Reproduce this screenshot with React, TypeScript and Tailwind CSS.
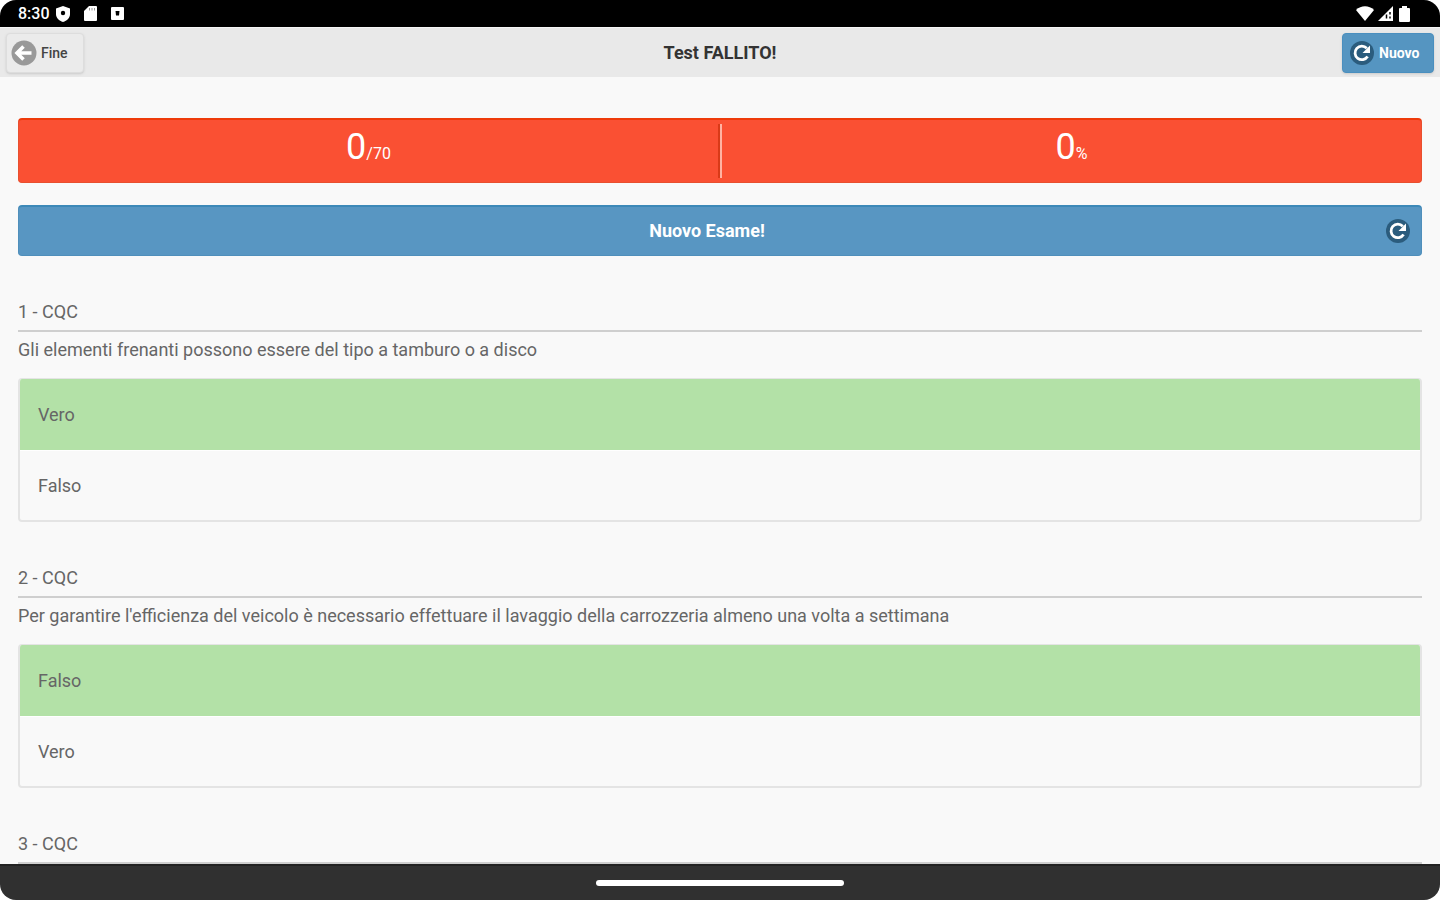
import React from "react";

type IconProps = { className?: string };

type Question = {
  id: number;
  category: string;
  text: string;
  answers: { label: string; correct: boolean }[];
};

const questions: Question[] = [
  {
    id: 1,
    category: "CQC",
    text: "Gli elementi frenanti possono essere del tipo a tamburo o a disco",
    answers: [
      { label: "Vero", correct: true },
      { label: "Falso", correct: false },
    ],
  },
  {
    id: 2,
    category: "CQC",
    text: "Per garantire l'efficienza del veicolo è necessario effettuare il lavaggio della carrozzeria almeno una volta a settimana",
    answers: [
      { label: "Falso", correct: true },
      { label: "Vero", correct: false },
    ],
  },
  {
    id: 3,
    category: "CQC",
    text: "",
    answers: [],
  },
];

const BackIcon = ({ className }: IconProps) => (
  <svg viewBox="0 0 26 26" className={className} aria-hidden="true">
    <circle cx="13" cy="13" r="12.5" fill="#999999" />
    <path
      d="M12.5 6.5 6 13l6.5 6.5M7 13h13.5"
      fill="none"
      stroke="#fff"
      strokeWidth="3.6"
    />
  </svg>
);

const RefreshIcon = ({ className }: IconProps) => (
  <svg viewBox="0 0 26 26" className={className} aria-hidden="true">
    <circle cx="13" cy="13" r="12" fill="#2b5c7d" />
    <path
      d="M18.6 16.5A6.8 6.8 0 1 1 17.8 8.200"
      fill="none"
      stroke="#fff"
      strokeWidth="2.8"
    />
    <path d="M21 5.500v7.500h-7.500z" fill="#fff" />
  </svg>
);

const StatusBar = () => (
  <div className="flex h-[27px] shrink-0 items-center justify-between bg-black pr-[30px] pl-[18px] text-white">
    <div className="flex items-center">
      <span className="w-9 text-base leading-none font-medium">8:30</span>
      <svg viewBox="0 0 14 16" className="ml-0.5 h-4 w-3.5" aria-hidden="true">
        <path
          d="M7 0 14 2.500V8c0 4-3 6.700-7 8-4-1.300-7-4-7-8V2.500z"
          fill="#fff"
        />
        <circle cx="7" cy="7" r="2.200" fill="#000" />
      </svg>
      <svg viewBox="0 0 13 15" className="ml-3.5 h-[15px] w-[13px]" aria-hidden="true">
        <path
          d="M5 0h7a1 1 0 0 1 1 1v13a1 1 0 0 1-1 1H1a1 1 0 0 1-1-1V5z"
          fill="#fff"
        />
        <path d="M5.500 2v2.500M8 2v2.500M10.500 2v2.500" stroke="#999" />
      </svg>
      <svg viewBox="0 0 13 13" className="ml-3.5 h-[13px] w-[13px]" aria-hidden="true">
        <rect width="13" height="13" rx="1" fill="#fff" />
        <path d="M4.500 4h4l-.5 4.500h-3z" fill="#000" />
      </svg>
    </div>
    <div className="flex items-center gap-1">
      <svg viewBox="0 0 18 15" className="h-[15px] w-[18px]" aria-hidden="true">
        <path d="M9 15 0 4C5-1 13-1 18 4z" fill="#fff" />
      </svg>
      <svg viewBox="0 0 15 15" className="h-[15px] w-[15px]" aria-hidden="true">
        <path d="M15 0v15H0z" fill="#fff" />
        <path d="M12 6v2.500M12 10.500v2M8.500 8.500v4" stroke="#000" strokeWidth="1.500" />
      </svg>
      <svg viewBox="0 0 11 16" className="ml-0.5 h-4 w-[11px]" aria-hidden="true">
        <path
          d="M3 0h5v2h2a1 1 0 0 1 1 1v12a1 1 0 0 1-1 1H1a1 1 0 0 1-1-1V3a1 1 0 0 1 1-1h2z"
          fill="#fff"
        />
      </svg>
    </div>
  </div>
);

const Header = () => (
  <header className="grid h-[50px] shrink-0 grid-cols-3 items-center border-t border-[#f5f5f5] bg-[#e9e9e9] px-1.5">
    <button className="flex h-10 w-[78px] items-center gap-1 justify-self-start rounded border border-[#dddddd] bg-[#ebebeb] pl-1 text-sm font-medium text-[#444444] shadow-sm">
      <BackIcon className="h-[26px] w-[26px]" />
      Fine
    </button>
    <h1 className="text-center text-lg leading-6 font-bold text-[#333333]">
      Test FALLITO!
    </h1>
    <button className="flex h-10 w-[92px] items-center gap-1 justify-self-end rounded border border-[#4a8fbf] bg-[#5595c1] pl-1.5 text-sm font-bold text-white shadow-sm">
      <RefreshIcon className="h-[26px] w-[26px]" />
      Nuovo
    </button>
  </header>
);

const Score = () => (
  <div className="flex h-[65px] items-center rounded border border-t-2 border-[#e8502f] border-t-[#ee3a0a] bg-[#fa5033] text-center text-base text-white">
    <div className="flex-1 pb-2">
      <span className="text-4xl">0</span>/70
    </div>
    <div className="h-[54px] w-1 border-r-2 border-l-2 border-r-[#ffb3a3] border-l-[#d93a18]" />
    <div className="flex-1 pb-2">
      <span className="text-4xl">0</span>%
    </div>
  </div>
);

const QuestionBlock = ({ question }: { question: Question }) => (
  <section className="mt-11 text-lg leading-6 text-[#666666]">
    <h2 className="border-b-2 border-[#cfcfcf] pb-1.5">
      {question.id} - {question.category}
    </h2>
    {question.text && <p className="mt-1.5">{question.text}</p>}
    {question.answers.length > 0 && (
      <ul className="mt-4 overflow-hidden rounded border-2 border-t border-[#e4e4e4]">
        {question.answers.map((answer) => (
          <li
            key={answer.label}
            className={
              answer.correct
                ? "flex h-[71px] items-center bg-[#b3e1a7] px-[18px]"
                : "flex h-[70px] items-center border-t border-white px-[18px]"
            }
          >
            {answer.label}
          </li>
        ))}
      </ul>
    )}
  </section>
);

const App = () => {
  return (
    <div className="h-screen bg-white">
      <div className="flex h-full flex-col overflow-hidden rounded-2xl bg-[#f9f9f9] font-['Roboto',sans-serif]">
        <StatusBar />
        <Header />
        <main className="min-h-0 flex-1 overflow-hidden px-[18px] pt-[41px]">
          <Score />
          <button className="mt-[22px] flex h-[51px] w-full items-center rounded border border-t-2 border-[#4f8fbb] border-t-[#3d89b8] bg-[#5896c2] pr-2.5 pl-2.5 text-lg font-bold text-white">
            <span className="flex-1">Nuovo Esame!</span>
            <RefreshIcon className="h-[26px] w-[26px]" />
          </button>
          {questions.map((question) => (
            <QuestionBlock key={question.id} question={question} />
          ))}
        </main>
        <div className="flex h-9 shrink-0 items-center justify-center border-t-2 border-[#222222] bg-[#303030]">
          <div className="h-1.5 w-[248px] rounded-full bg-white" />
        </div>
      </div>
    </div>
  );
};

export default App;
